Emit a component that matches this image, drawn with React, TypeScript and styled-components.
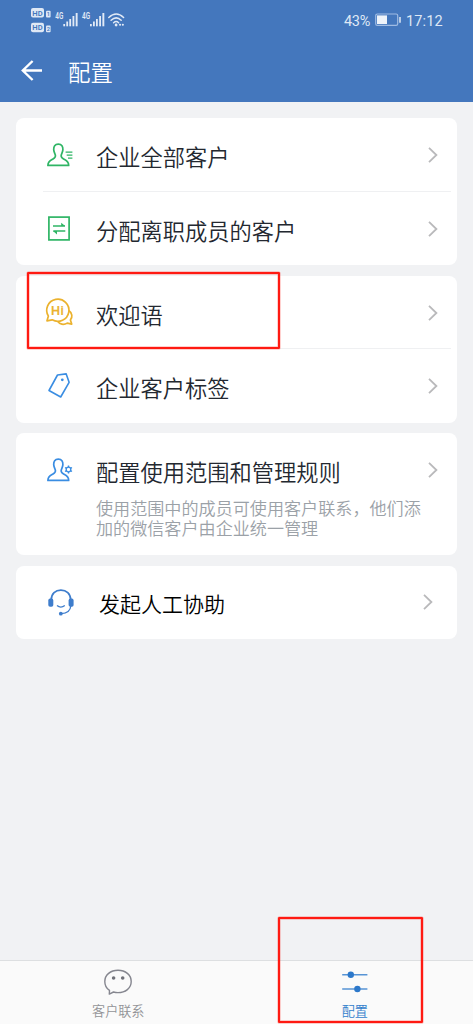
import React from "react";
import styled, { createGlobalStyle } from "styled-components";

const GlobalStyle = createGlobalStyle`
  * { box-sizing: border-box; }
  body {
    margin: 0;
    background: #f1f2f4;
    font-family: "Noto Sans CJK SC", sans-serif;
    font-weight: 350;
  }
  svg { display: block; flex: none; overflow: visible; }
`;

const Screen = styled.div`
  position: relative;
  width: 473px;
  height: 1024px;
  display: flex;
  flex-direction: column;
  background: #f1f2f4;
  overflow: hidden;
`;

const Header = styled.header`
  height: 102px;
  flex: none;
  background: #4477bd;
  color: #fff;
`;

const StatusBar = styled.div`
  height: 40px;
  display: flex;
  justify-content: space-between;
  padding: 0 31px;
`;

const StatusRight = styled.div`
  display: flex;
  align-items: center;
  font: 14.5px/20px Roboto, sans-serif;
  color: #dfe8f5;
`;

const Percent = styled.span`
  width: 31px;
  margin-top: 3px;
  letter-spacing: -0.3px;
`;

const Clock = styled.span`
  width: 36px;
  margin: 3px 0 0 5px;
  white-space: nowrap;
  letter-spacing: 0.15px;
`;

const TitleBar = styled.div`
  height: 61px;
  display: flex;
  align-items: center;
  padding-left: 21px;
`;

const PageTitle = styled.h1`
  margin: 1px 0 0 26px;
  font-size: 22.4px;
  line-height: 32px;
  font-weight: 350;
`;

const Content = styled.main`
  flex: 1;
  display: flex;
  flex-direction: column;
  gap: 10.5px;
  padding: 16px 16px 0;
`;

const Card = styled.section`
  background: #fff;
  border-radius: 8px;
`;

const Row = styled.div<{ $tall?: boolean }>`
  position: relative;
  height: ${(p) => (p.$tall ? "122px" : "73.5px")};
  display: flex;
  align-items: flex-start;
  padding-left: 27px;

  & + &::before {
    content: "";
    position: absolute;
    top: -1px;
    left: 27px;
    right: 6px;
    height: 1px;
    background: #eff0f2;
  }
`;

const IconSlot = styled.div`
  width: 53px;
  height: 73px;
  flex: none;
  display: flex;
  align-items: center;
`;

const Texts = styled.div<{ $indent?: boolean }>`
  flex: 1;
  padding-top: ${(p) => (p.$indent ? "21px" : "22px")};
  margin-left: ${(p) => (p.$indent ? "3px" : "0")};
`;

const Label = styled.div<{ $plain?: boolean }>`
  font-size: ${(p) => (p.$plain ? "21px" : "22.25px")};
  line-height: 32px;
  color: ${(p) => (p.$plain ? "#000" : "#232830")};
  white-space: nowrap;
`;

const Description = styled.p`
  margin: 11px 0 0;
  font-size: 17.1px;
  line-height: 20px;
  color: #9ba1a7;
  white-space: nowrap;
`;

const ChevronSlot = styled.div<{ $inset?: boolean }>`
  height: ${(p) => (p.$inset ? "72px" : "74px")};
  display: flex;
  align-items: center;
  margin-right: ${(p) => (p.$inset ? "24px" : "19px")};
`;

const TabBar = styled.nav`
  height: 64px;
  flex: none;
  display: flex;
  background: #fafafa;
  border-top: 1px solid #dddfe1;
`;

const Tab = styled.div<{ $active?: boolean }>`
  flex: 1;
  display: flex;
  flex-direction: column;
  align-items: center;
  padding-top: 8px;
  color: ${(p) => (p.$active ? "#3380cc" : "#929397")};
  font-size: 13.1px;
  line-height: 20px;
`;

const TabLabel = styled.span`
  margin-top: 5px;
`;

const Marker = styled.div<{ $x: number; $y: number; $w: number; $h: number }>`
  position: absolute;
  left: ${(p) => p.$x}px;
  top: ${(p) => p.$y}px;
  width: ${(p) => p.$w}px;
  height: ${(p) => p.$h}px;
  border: 2px solid #ff1a12;
  box-shadow: 0 0 0 0.5px #ff1a1266, inset 0 0 0 0.5px #ff1a1266;
  border-radius: 1px;
  pointer-events: none;
`;

const HdBadge = ({ y, n }: { y: number; n: string }) => (
  <g>
    <rect x="0" y={y} width="13" height="9.6" rx="2" fill="#dfe8f5" />
    <text x="6.5" y={y + 7.5} textAnchor="middle" fontFamily="Roboto, sans-serif" fontWeight="600" fontSize="7.6" fill="#4477bd">HD</text>
    <rect x="15" y={y + 2.8} width="4.6" height="6.8" rx="1" fill="#dfe8f5" />
    <text x="17.3" y={y + 8.3} textAnchor="middle" fontFamily="Roboto, sans-serif" fontWeight="600" fontSize="5.6" fill="#4477bd">{n}</text>
  </g>
);

const Signal = ({ x }: { x: number }) => (
  <g fill="#e2eaf6">
    <text x={x} y="19" fontFamily="Roboto, sans-serif" fontWeight="600" fontSize="8.2" textLength="8" lengthAdjust="spacingAndGlyphs">4G</text>
    <rect x={x + 8} y="24" width="1.8" height="2.3" />
    <rect x={x + 11} y="21.5" width="1.8" height="4.8" />
    <rect x={x + 14} y="19" width="1.8" height="7.3" />
    <rect x={x + 17.2} y="16" width="1.8" height="10.3" />
    <rect x={x + 20.4} y="13" width="1.9" height="13.3" />
  </g>
);

const StatusIcons = () => (
  <svg width="95" height="40" viewBox="0 0 95 40">
    <HdBadge y={8} n="1" />
    <HdBadge y={22.7} n="2" />
    <Signal x={24.3} />
    <Signal x={51} />
    <g fill="none" stroke="#e2eaf6" strokeWidth="1.5" strokeLinecap="round">
      <path d="M77.8 17.5Q85.2 10.5 92.6 17.5M80.1 20.3Q85.2 15.5 90.2 20.3M82.6 22.7Q85.2 20.4 87.6 22.7" />
      <path d="M89 24.7h.1M91.8 24.7h.1" strokeWidth="2" />
    </g>
    <circle cx="85.1" cy="25" r="1.4" fill="#e2eaf6" />
  </svg>
);

const Battery = () => (
  <svg width="26" height="14" viewBox="0 0 26 14">
    <rect x=".7" y="1" width="22" height="11.4" rx="1.6" fill="none" stroke="#9fbbe3" strokeWidth="1.2" />
    <rect x="2" y="2.4" width="10" height="8.6" fill="#eef3fa" />
    <path d="M25 4v5.8" stroke="#dfe8f5" strokeWidth="1.5" />
  </svg>
);

const BackArrow = () => (
  <svg width="21" height="21" viewBox="0 0 21 21" fill="none" stroke="#fff" strokeWidth="2.4">
    <path d="M11.6 1L1.8 10.5 11.6 20M2 10.5H21" />
  </svg>
);

const personPath =
  "M11.3 1.2C7.8 1.2 6.6 3.7 6.7 6.6C6.8 9 8 10.6 8.4 12.3C8.8 14.2 7.9 15 6 16.1C3.5 17.5 1 18.2 .9 22.4H21.7C21.6 18.2 19.1 17.5 16.6 16.1C14.7 15 13.8 14.2 14.2 12.3C14.6 10.6 15.8 9 15.9 6.6C16 3.7 14.8 1.2 11.3 1.2Z";

const IconSvg = styled.svg<{ $shift: number }>`
  margin-left: ${(p) => p.$shift}px;
`;

const PersonListIcon = () => (
  <IconSvg $shift={4} width="26" height="24" viewBox="0 0 26 24" fill="none" stroke="#2fb565">
    <path d={personPath} strokeWidth="1.7" strokeLinejoin="round" />
    <path d="M18.6 9.2H25.4M19.7 12.2H25.4M21 15.1H25.4" strokeWidth="1.3" />
  </IconSvg>
);

const PersonGearIcon = () => (
  <IconSvg $shift={4} width="26" height="24" viewBox="0 0 26 24" fill="none" stroke="#3a8de2">
    <path d={personPath} strokeWidth="1.7" strokeLinejoin="round" />
    <circle cx="21.5" cy="11.5" r="2.3" strokeWidth="1.3" />
    <path d="M21.5 7.5v1.7M21.5 13.8v1.7M18 9.5l1.5.8M23.5 12.7l1.5.8M25 9.5l-1.5.8M19.5 12.7l-1.5.8" strokeWidth="1.4" />
  </IconSvg>
);

const TransferIcon = () => (
  <IconSvg $shift={5} width="22" height="25" viewBox="0 0 22 25" fill="none" stroke="#2fb565">
    <rect x=".9" y="1.1" width="20.2" height="22.8" strokeWidth="1.7" />
    <path d="M5 10.1H17M5.3 15H17.3" strokeWidth="1.5" />
    <path d="M13.2 6.8L17.2 10.1H13.2ZM9 18.4L5 15H9Z" fill="#2fb565" stroke="none" />
  </IconSvg>
);

const HiIcon = () => (
  <IconSvg $shift={2} width="28" height="28" viewBox="0 0 28 28" fill="none" stroke="#ebb22e" strokeWidth="1.7" strokeLinejoin="round">
    <path d="M3.4 18.1A11.1 11.1 0 1 1 7.2 21.8L2 22.8Z" />
    <path d="M23.5 12.2C27.5 15 27.7 19 25.4 22L26.7 26.1L22.2 25.1C18.7 27.3 14.5 26.3 12.7 23.4" />
    <text x="12.6" y="16.9" textAnchor="middle" fontFamily="Roboto, sans-serif" fontWeight="500" fontSize="12.8" letterSpacing=".4" fill="#ebb22e" stroke="#ebb22e" strokeWidth=".2">Hi</text>
  </IconSvg>
);

const TagIcon = () => (
  <IconSvg $shift={5} width="22" height="25" viewBox="0 0 22 25" fill="none" stroke="#3a8de2" strokeWidth="1.6" strokeLinejoin="round">
    <path d="M9.5 2L18.2 .9L21.1 9.3L12.7 24L1 17.5Z" />
    <circle cx="14.3" cy="6.8" r="1.4" fill="#3a8de2" stroke="none" />
  </IconSvg>
);

const HeadsetIcon = () => (
  <IconSvg $shift={5} width="26" height="27" viewBox="0 0 26 27" fill="none" stroke="#3e7dcc">
    <path d="M3.2 11C3.3 4.6 7.5 1.1 12.9 1.1S22.6 4.6 22.7 11" strokeWidth="1.7" />
    <rect x=".3" y="9.6" width="5" height="8.2" rx="1.8" fill="#3e7dcc" stroke="none" />
    <rect x="20.6" y="9.6" width="5" height="8.2" rx="1.8" fill="#3e7dcc" stroke="none" />
    <path d="M9 16.6Q12.8 19.8 16.8 16.6M22.8 17C22.4 21.6 18.8 24.4 13.2 24.7" strokeWidth="1.3" />
    <circle cx="12.8" cy="24.7" r="1.9" fill="#3e7dcc" stroke="none" />
  </IconSvg>
);

const Chevron = () => (
  <svg width="10" height="16" viewBox="0 0 10 16" fill="none" stroke="#b9b9bb" strokeWidth="1.8">
    <path d="M1 .9L8.4 8L1 15.1" />
  </svg>
);

const ChatIcon = () => (
  <svg width="28" height="27" viewBox="0 0 28 27" fill="none" stroke="#85868f" strokeWidth="1.4">
    <path d="M5.5 21.4C2.3 19.4 .8 16.2 .8 12.5C.8 5.7 6.6 1.3 14 1.3S27.2 5.7 27.2 12.5S21.4 23.6 14 23.6C12.3 23.6 11 23.4 9.5 23L5.3 25.1Z" strokeLinejoin="round" />
    <circle cx="9.6" cy="9" r="1.8" fill="#707179" stroke="none" />
    <circle cx="18.7" cy="9" r="1.8" fill="#707179" stroke="none" />
  </svg>
);

const SlidersIcon = () => (
  <svg width="26" height="27" viewBox="0 0 26 27" stroke="#5794d5" strokeWidth="1.6">
    <path d="M.2 5.7H25.4M.2 20H25.4" />
    <circle cx="8.8" cy="5.7" r="3.2" fill="#2c78ca" stroke="none" />
    <circle cx="15.4" cy="20" r="3.2" fill="#2c78ca" stroke="none" />
  </svg>
);

type ItemProps = {
  icon: React.ReactNode;
  label: string;
  plain?: boolean;
  children?: React.ReactNode;
};

const Item = ({ icon, label, plain, children }: ItemProps) => (
  <Row $tall={!!children}>
    <IconSlot>{icon}</IconSlot>
    <Texts $indent={plain}>
      <Label $plain={plain}>{label}</Label>
      {children}
    </Texts>
    <ChevronSlot $inset={plain}>
      <Chevron />
    </ChevronSlot>
  </Row>
);

export default function App() {
  return (
    <>
      <GlobalStyle />
      <Screen>
        <Header>
          <StatusBar>
            <StatusIcons />
            <StatusRight>
              <Percent>43%</Percent>
              <Battery />
              <Clock>17:12</Clock>
            </StatusRight>
          </StatusBar>
          <TitleBar>
            <BackArrow />
            <PageTitle>配置</PageTitle>
          </TitleBar>
        </Header>
        <Content>
          <Card>
            <Item icon={<PersonListIcon />} label="企业全部客户" />
            <Item icon={<TransferIcon />} label="分配离职成员的客户" />
          </Card>
          <Card>
            <Item icon={<HiIcon />} label="欢迎语" />
            <Item icon={<TagIcon />} label="企业客户标签" />
          </Card>
          <Card>
            <Item icon={<PersonGearIcon />} label="配置使用范围和管理规则">
              <Description>
                使用范围中的成员可使用客户联系，他们添
                <br />
                加的微信客户由企业统一管理
              </Description>
            </Item>
          </Card>
          <Card>
            <Item icon={<HeadsetIcon />} label="发起人工协助" plain />
          </Card>
        </Content>
        <TabBar>
          <Tab>
            <ChatIcon />
            <TabLabel>客户联系</TabLabel>
          </Tab>
          <Tab $active>
            <SlidersIcon />
            <TabLabel>配置</TabLabel>
          </Tab>
        </TabBar>
        <Marker $x={27} $y={272} $w={253} $h={77} />
        <Marker $x={278} $y={917} $w={145} $h={106} />
      </Screen>
    </>
  );
}
